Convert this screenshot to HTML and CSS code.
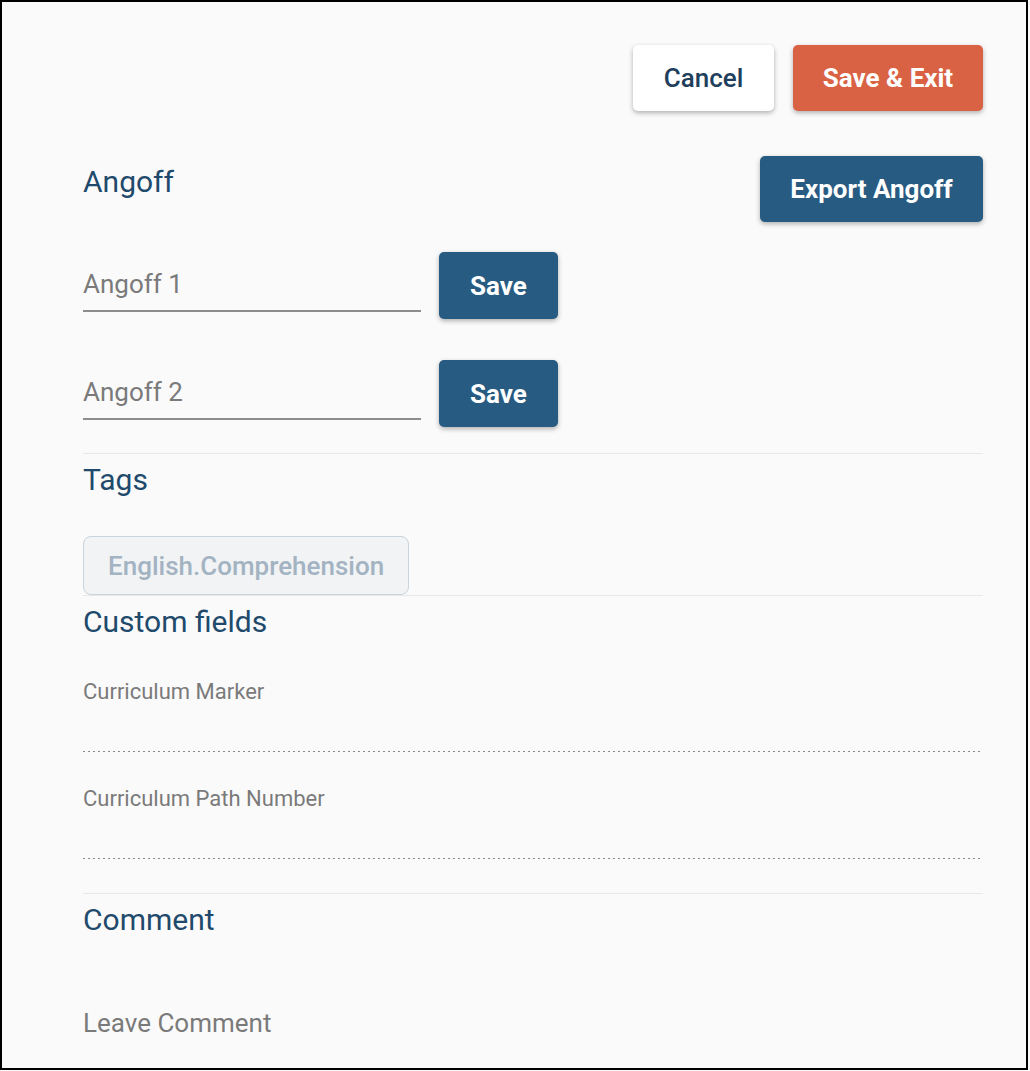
FILE: index.html
```html
<!DOCTYPE html>
<html lang="en">

    <head>
        <meta charset="UTF-8">
        <meta name="viewport" content="width=device-width, initial-scale=1.0">
        <title>Edit Item</title>
        <link rel="stylesheet" href="styles.css">
    </head>

    <body>
        <div class="frame">
            <div class="actions">
                <button class="btn btn-light">Cancel</button>
                <button class="btn btn-orange">Save &amp; Exit</button>
            </div>

            <div class="angoff-head">
                <h2 class="title">Angoff</h2>
                <button class="btn btn-blue btn-export">Export Angoff</button>
            </div>

            <div class="angoff-row">
                <input class="angoff-input" type="text" placeholder="Angoff 1">
                <button class="btn btn-blue btn-save">Save</button>
            </div>
            <div class="angoff-row">
                <input class="angoff-input" type="text" placeholder="Angoff 2">
                <button class="btn btn-blue btn-save">Save</button>
            </div>

            <div class="section section-tags">
                <h2 class="title">Tags</h2>
                <div class="tags">
                    <span class="tag">English.Comprehension</span>
                </div>
            </div>

            <div class="section">
                <h2 class="title">Custom fields</h2>
                <div class="field">
                    <div class="field-label">Curriculum Marker</div>
                    <div class="field-value"></div>
                </div>
                <div class="field">
                    <div class="field-label">Curriculum Path Number</div>
                    <div class="field-value"></div>
                </div>
            </div>

            <div class="section section-comment">
                <h2 class="title">Comment</h2>
                <textarea class="comment" placeholder="Leave Comment"></textarea>
            </div>
        </div>
    </body>

</html>
```

FILE: styles.css
```css
body {
    margin: 0;
    padding: 0;
    background-color: #fafafa;
    font-family: Roboto, "Liberation Sans", sans-serif;
}

.frame {
    box-sizing: border-box;
    width: 1028px;
    height: 1070px;
    border: 2px solid #000;
    background-color: #fafafa;
    padding: 43px 43px 0 81px;
    overflow: hidden;
}

.btn {
    box-sizing: border-box;
    height: 66px;
    border: none;
    border-radius: 5px;
    font-family: Roboto, "Liberation Sans", sans-serif;
    font-size: 26px;
    cursor: pointer;
    box-shadow: 0 2px 5px rgba(0, 0, 0, 0.3);
}

.btn-light {
    width: 141px;
    background-color: #fff;
    color: #1f3f5c;
    font-weight: 500;
}

.btn-orange {
    width: 190px;
    background-color: #da6244;
    color: #fff;
    font-weight: 700;
}

.btn-blue {
    background-color: #285b81;
    color: #fff;
    font-weight: 700;
}

.btn-export {
    width: 223px;
}

.btn-save {
    width: 119px;
    height: 67px;
}

.actions {
    display: flex;
    justify-content: flex-end;
    gap: 19px;
}

.title {
    margin: 0;
    font-size: 30px;
    line-height: 34px;
    font-weight: 400;
    color: #1f4a6c;
}

.angoff-head {
    display: flex;
    justify-content: space-between;
    align-items: flex-start;
    margin-top: 45px;
}

.angoff-head .title {
    margin-top: 9px;
}

.angoff-row {
    display: flex;
    align-items: flex-start;
    gap: 18px;
    margin-top: 30px;
}

.angoff-row + .angoff-row {
    margin-top: 41px;
}

.angoff-input {
    box-sizing: border-box;
    width: 338px;
    height: 60px;
    padding: 6px 0 0;
    border: none;
    border-bottom: 2px solid #8c8c8c;
    background: transparent;
    font-family: Roboto, "Liberation Sans", sans-serif;
    font-size: 26px;
    color: #333;
    outline: none;
}

.angoff-input::placeholder {
    color: #7a7a7a;
}

.section {
    border-top: 1px solid #e8e8e8;
    padding-top: 9px;
}

.section-tags {
    margin-top: 26px;
}

.section-comment {
    margin-top: 34px;
}

.tags {
    display: flex;
    margin-top: 39px;
}

.tag {
    box-sizing: border-box;
    height: 59px;
    display: flex;
    align-items: center;
    padding: 0 24px;
    border: 1px solid #c9d3db;
    border-radius: 8px;
    background-color: #f1f3f5;
    color: #a3b3c2;
    font-size: 26px;
    font-weight: 500;
}

.field {
    margin-top: 40px;
    margin-right: 3px;
}

.field + .field {
    margin-top: 34px;
}

.field-label {
    font-size: 22px;
    line-height: 26px;
    color: #7a7a7a;
}

.field-value {
    height: 47px;
    background-image: linear-gradient(to right, #8a8a8a 2px, transparent 2px);
    background-size: 5px 1px;
    background-repeat: repeat-x;
    background-position: left bottom;
}

.comment {
    display: block;
    box-sizing: border-box;
    width: 100%;
    height: 80px;
    margin-top: 71px;
    padding: 0;
    border: none;
    background: transparent;
    resize: none;
    outline: none;
    font-family: Roboto, "Liberation Sans", sans-serif;
    font-size: 26px;
    line-height: 30px;
    color: #333;
}

.comment::placeholder {
    color: #7a7a7a;
}
```
